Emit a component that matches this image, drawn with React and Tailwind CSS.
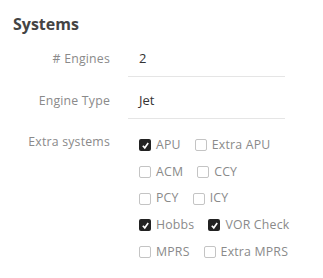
import React from 'react';

const rows = [
  [{ label: 'APU', checked: true }, { label: 'Extra APU' }],
  [{ label: 'ACM' }, { label: 'CCY' }],
  [{ label: 'PCY' }, { label: 'ICY' }],
  [{ label: 'Hobbs', checked: true }, { label: 'VOR Check', checked: true }],
  [{ label: 'MPRS' }, { label: 'Extra MPRS' }],
];

const Check = ({ label, checked }) => (
  <label className="flex items-center gap-[5px] mr-[14px]">
    {checked ? (
      <span className="w-[12px] h-[12px] rounded-[2px] bg-[#222] flex items-center justify-center">
        <svg width="9" height="9" viewBox="0 0 10 10">
          <path d="M2 5.2 L4.2 7.6 L8 2.2" stroke="#fff" strokeWidth="1.8" fill="none" />
        </svg>
      </span>
    ) : (
      <span className="w-[12px] h-[12px] rounded-[2px] border border-[#c4c4c4] bg-white" />
    )}
    <span className="text-[12.3px] tracking-[0.2px] text-[#8a8a8a]">{label}</span>
  </label>
);

const Systems = () => {
  return (
    <div className="w-[323px] h-[278px] bg-white pt-[12px] pl-[13px]" style={{ fontFamily: '"Open Sans", sans-serif' }}>
      <h2 className="text-[16px] font-bold text-[#444] leading-[24px]">Systems</h2>

      <div className="mt-[12px] flex">
        <div className="w-[97px] text-right text-[12.3px] tracking-[0.2px] text-[#8a8a8a] leading-[20px] pt-[1px]"># Engines</div>
        <div className="ml-[18px] w-[157px] border-b border-[#e5e5e5] pl-[11px] pb-[8px] text-[13px] text-[#333] leading-[20px]">2</div>
      </div>

      <div className="mt-[13px] flex">
        <div className="w-[97px] text-right text-[12.3px] tracking-[0.2px] text-[#8a8a8a] leading-[20px] pt-[1px]">Engine Type</div>
        <div className="ml-[18px] w-[157px] border-b border-[#e5e5e5] pl-[11px] pb-[8px] text-[13px] text-[#333] leading-[20px]">Jet</div>
      </div>

      <div className="mt-[13px] flex">
        <div className="w-[97px] text-right text-[12.3px] tracking-[0.2px] text-[#8a8a8a] leading-[19px]">Extra systems</div>
        <div className="ml-[29px] flex flex-col gap-[6.75px] pt-[3px]">
          {rows.map((row, i) => (
            <div key={i} className="flex items-center h-[20px]">
              {row.map((c) => (
                <Check key={c.label} {...c} />
              ))}
            </div>
          ))}
        </div>
      </div>
    </div>
  );
};

export default Systems;
